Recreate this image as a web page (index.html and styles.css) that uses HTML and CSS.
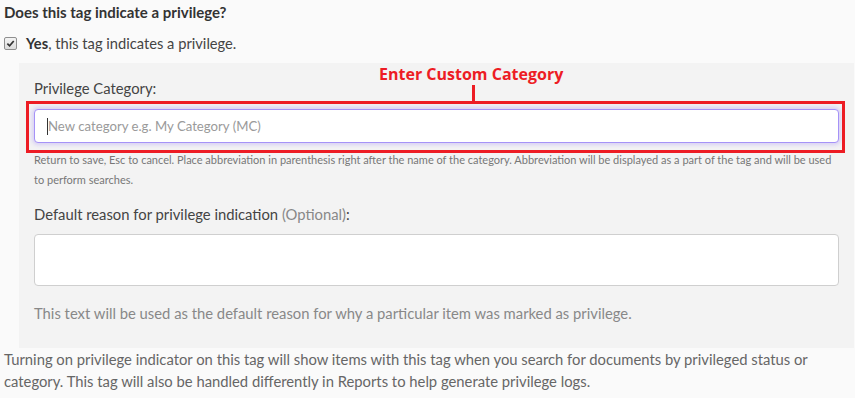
FILE: index.html
```
<!DOCTYPE html>
<html lang="en">
<head>
  <meta charset="UTF-8">
  <title>Privilege Tag</title>
  <link rel="stylesheet" href="styles.css">
</head>
<body>
  <div class="section-title">Does this tag indicate a privilege?</div>
  <label class="check-row">
    <span class="check-box">
      <svg viewBox="0 0 10 10" width="9" height="9"><path d="M1.5 5.2 L4 7.6 L8.6 2.2" fill="none" stroke="#333" stroke-width="1.9"/></svg>
    </span>
    <span><b>Yes</b>, this tag indicates a privilege.</span>
  </label>

  <div class="panel">
    <div class="field-label">Privilege Category:</div>
    <div class="input-wrap">
      <input class="category-input" type="text" placeholder="New category e.g. My Category (MC)">
      <span class="caret"></span>
      <div class="callout">
        <span class="callout-text">Enter Custom Category</span>
        <span class="callout-line"></span>
      </div>
    </div>
    <div class="help-small">Return to save, Esc to cancel. Place abbreviation in parenthesis right after the name of the category. Abbreviation will be displayed as a part of the tag and will be used to perform searches.</div>

    <div class="field-label reason-label">Default reason for privilege indication <span class="muted">(Optional)</span>:</div>
    <textarea class="reason-input"></textarea>
    <div class="help">This text will be used as the default reason for why a particular item was marked as privilege.</div>
  </div>

  <p class="footnote">Turning on privilege indicator on this tag will show items with this tag when you search for documents by privileged status or category. This tag will also be handled differently in Reports to help generate privilege logs.</p>
</body>
</html>
```

FILE: styles.css
```
body {
  margin: 0;
  padding: 0 1px 0 4px;
  background: #fafafa;
  font-family: Lato, 'Open Sans', Arial, sans-serif;
  font-size: 14.8px;
  color: #444;
}
.section-title {
  font-weight: 700;
  font-size: 15px;
  line-height: 20px;
  margin-top: 2px;
  color: #333;
}
.check-row {
  display: flex;
  align-items: center;
  gap: 9px;
  margin-top: 11px;
  line-height: 20px;
  font-size: 14.7px;
  color: #444;
}
.check-row b {
  color: #333;
}
.check-box {
  width: 11px;
  height: 11px;
  border: 1px solid #8f8f8f;
  border-radius: 2px;
  background: linear-gradient(#f4f4f4, #dcdcdc);
  display: flex;
  align-items: center;
  justify-content: center;
}
.panel {
  margin: 10px 0 0 15px;
  background: #f3f3f3;
  padding: 15px 15px 25px 15px;
}
.field-label {
  line-height: 20px;
  color: #444;
}
.muted {
  color: #888;
}
.input-wrap {
  position: relative;
  margin-top: 11px;
}
.category-input {
  display: block;
  box-sizing: border-box;
  width: 100%;
  height: 34px;
  padding: 0 12px 0 13px;
  border: 1px solid #a592f7;
  border-radius: 4px;
  background: #fff;
  box-shadow: 0 0 4px 2px rgba(160, 140, 245, 0.35);
  font-family: Lato, 'Open Sans', Arial, sans-serif;
  font-size: 13.2px;
  color: #444;
  outline: none;
}
.category-input::placeholder {
  color: #9a9a9a;
}
.caret {
  position: absolute;
  left: 13px;
  top: 9px;
  width: 1px;
  height: 17px;
  background: #333;
}
.callout {
  position: absolute;
  left: -8px;
  right: -6px;
  top: -8px;
  bottom: -10px;
  border: 3px solid #ed1c24;
  pointer-events: none;
}
.callout-text {
  position: absolute;
  left: 350px;
  top: -40px;
  font-family: 'Open Sans', Arial, sans-serif;
  font-weight: 700;
  font-size: 16px;
  line-height: 20px;
  color: #ed1c24;
  white-space: nowrap;
}
.callout-line {
  position: absolute;
  left: 443px;
  top: -19px;
  width: 3px;
  height: 19px;
  background: #ed1c24;
}
.help-small {
  margin-top: 7px;
  font-size: 11px;
  line-height: 20px;
  color: #777;
}
.reason-label {
  margin-top: 14px;
}
.reason-input {
  display: block;
  box-sizing: border-box;
  width: 100%;
  height: 52px;
  margin-top: 10px;
  border: 1px solid #cfcfcf;
  border-radius: 4px;
  background: #fff;
  resize: none;
}
.help {
  margin-top: 17px;
  line-height: 20px;
  color: #888;
}
.footnote {
  margin: 0;
  line-height: 22px;
  color: #666;
}
```
